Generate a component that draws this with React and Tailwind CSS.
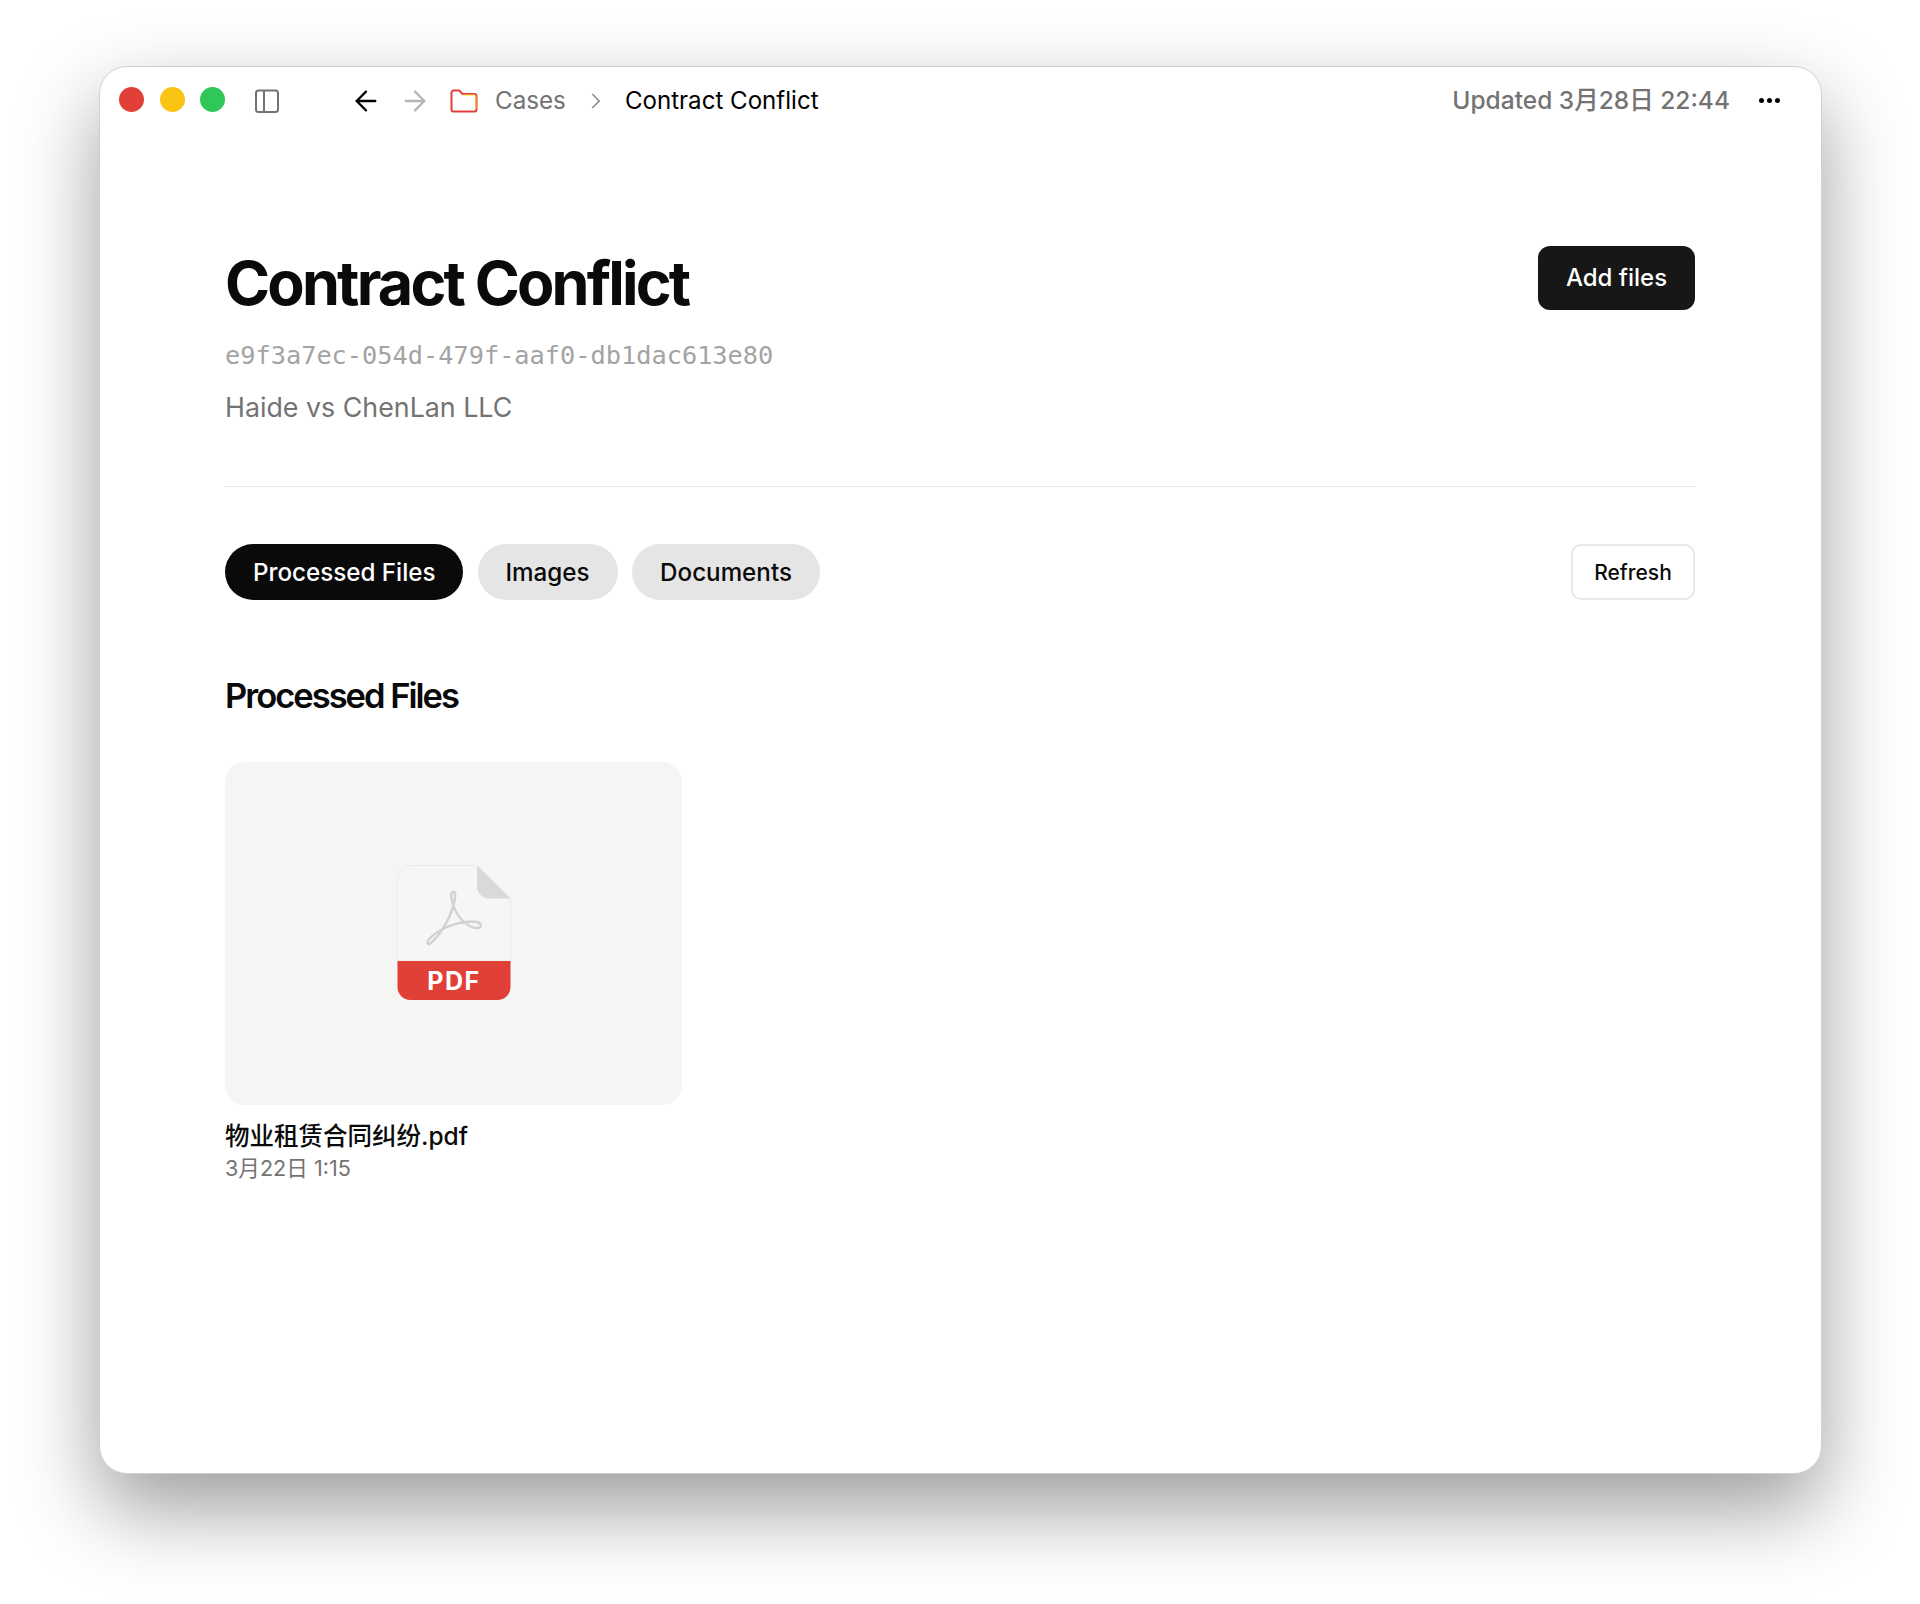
import { ArrowLeft, ArrowRight, ChevronRight } from "lucide-react";

const sans = "font-['Inter','Noto_Sans_CJK_SC',sans-serif]";

function SidebarIcon() {
  return (
    <svg width="26" height="26" viewBox="0 0 26 26" fill="none" stroke="#737373" strokeWidth="2">
      <rect x="2" y="2.500" width="22" height="21.500" rx="2.5" />
      <path d="M10 2.500v21.500" />
    </svg>
  );
}

function FolderIcon() {
  return (
    <svg width="28" height="24" viewBox="0 0 28 24" fill="none">
      <path
        d="M1.500 3.500a2 2 0 0 1 2-2h5.700l3.300 3.400h12a2 2 0 0 1 2 2V20.500a2 2 0 0 1-2 2H3.500a2 2 0 0 1-2-2z"
        stroke="#e0403a"
        strokeWidth="2"
      />
      <path d="M13 5.900h11.500a1.500 1.500 0 0 1 1.500 1.500V20" stroke="#f5c518" strokeWidth="1" />
    </svg>
  );
}

function PdfIcon() {
  return (
    <svg className="mb-[2px]" width="114" height="136" viewBox="0 0 114 136" fill="none">
      <path d="M14 .5h66l33.500 33V96H.5V14A13.500 13.500 0 0 1 14 .5z" fill="#f6f6f5" stroke="#ecebea" />
      <path d="M80 .5l33.500 33H92A12 12 0 0 1 80 21.500z" fill="#d9d9d8" />
      <path d="M.5 96h113v26a13 13 0 0 1-13 13H13.500a13 13 0 0 1-13-13z" fill="#e04038" />
      <path
        d="M31 79c-3-3 6-10 13-14 10-6 27-10 36-8 5 1 5 6 0 6-9 0-20-10-24-24-2-7-3-11 0-12 4-1 2 9-1 18-4 12-12 24-18 30-3 3-5 5-6 4z"
        stroke="#d2d2d1"
        strokeWidth="2.4"
        strokeLinejoin="round"
      />
      <text
        x="57"
        y="125"
        textAnchor="middle"
        fill="#fff"
        fontFamily="Inter, sans-serif"
        fontWeight="700"
        fontSize="25"
        letterSpacing="1.5"
      >
        PDF
      </text>
    </svg>
  );
}

export default function App() {
  return (
    <div className={`min-h-[1604px] bg-white pt-[66px] pl-[99px] ${sans}`}>
      <div className="w-[1723px] h-[1408px] bg-white rounded-[28px] border border-[#d0d0d0] shadow-[0_35px_82px_rgba(0,0,0,0.39)]">
        {/* Title bar */}
        <div className="flex items-center h-[67px] pl-[19px] pr-[41px]">
          <div className="flex gap-[15.500px] mb-[3px]">
            <span className="w-[25px] h-[25px] rounded-full bg-[#e04038]" />
            <span className="w-[25px] h-[25px] rounded-full bg-[#fbc312]" />
            <span className="w-[25px] h-[25px] rounded-full bg-[#30c759]" />
          </div>
          <div className="ml-[29px] flex">
            <SidebarIcon />
          </div>
          <ArrowLeft className="ml-[70px] text-black" size={32} strokeWidth={1.7} />
          <ArrowRight className="ml-[17px] text-[#b5b5b5]" size={32} strokeWidth={1.7} />
          <div className="ml-[19px] flex">
            <FolderIcon />
          </div>
          <span className="ml-[17px] pt-[2px] text-[24.200px] text-[#737373]">Cases</span>
          <ChevronRight className="ml-[17px] text-[#8a8a8a]" size={26} strokeWidth={1.5} />
          <span className="ml-[16px] pt-[2px] text-[24.100px] text-black">Contract Conflict</span>
          <span className="ml-auto text-[24.500px] font-medium text-[#737373]">Updated 3月28日 22:44</span>
          <div className="ml-[29px] flex gap-[3px]">
            <span className="w-[5px] h-[5px] rounded-full bg-black" />
            <span className="w-[5px] h-[5px] rounded-full bg-black" />
            <span className="w-[5px] h-[5px] rounded-full bg-black" />
          </div>
        </div>

        <main className="pl-[125px] pr-[126px] pt-[112px]">
          {/* Header */}
          <div className="flex justify-between items-start">
            <div>
              <h1 className="text-[61px] leading-[74px] font-[650] tracking-[-0.046em] text-[#0a0a0a]">
                Contract Conflict
              </h1>
              <p className="mt-[18px] text-[25.300px] leading-[36px] font-['DejaVu_Sans_Mono',monospace] text-[#a3a3a3]">
                e9f3a7ec-054d-479f-aaf0-db1dac613e80
              </p>
              <p className="mt-[15px] text-[26.800px] leading-[36px] text-[#737373]">Haide vs ChenLan LLC</p>
            </div>
            <button className="w-[157px] h-[64px] rounded-[12px] bg-[#171717] text-white text-[24px] font-medium">
              Add files
            </button>
          </div>

          <div className="mt-[61px] h-px bg-[#e8e8e8]" />

          {/* Tabs */}
          <div className="mt-[57px] flex items-start">
            <div className="flex gap-[14.500px] text-[24.200px] font-medium">
              <button className="h-[56px] pl-[28px] pr-[27.500px] pt-[2px] rounded-full bg-[#0a0a0a] text-white">Processed Files</button>
              <button className="h-[56px] px-[28px] pt-[2px] rounded-full bg-[#e5e5e5] text-[#0a0a0a]">Images</button>
              <button className="h-[56px] px-[28px] pt-[2px] rounded-full bg-[#e5e5e5] text-[#0a0a0a]">Documents</button>
            </div>
            <button className="ml-auto w-[124px] h-[56px] rounded-[10px] pt-[1px] bg-white border-2 border-[#e8e8e8] text-[21px] font-medium text-[#0a0a0a]">
              Refresh
            </button>
          </div>

          <h2 className="mt-[72px] text-[34.500px] leading-[48px] font-semibold tracking-[-0.058em] text-[#0a0a0a]">
            Processed Files
          </h2>

          {/* File card */}
          <div className="mt-[42px] w-[457px]">
            <div className="h-[343px] rounded-[20px] bg-[#f5f5f3] flex items-center justify-center">
              <PdfIcon />
            </div>
            <p className="mt-[16px] text-[24.500px] leading-[31px] font-medium text-[#0a0a0a]">物业租赁合同纠纷.pdf</p>
            <p className="text-[21.600px] leading-[32px] text-[#737373]">3月22日 1:15</p>
          </div>
        </main>
      </div>
    </div>
  );
}
